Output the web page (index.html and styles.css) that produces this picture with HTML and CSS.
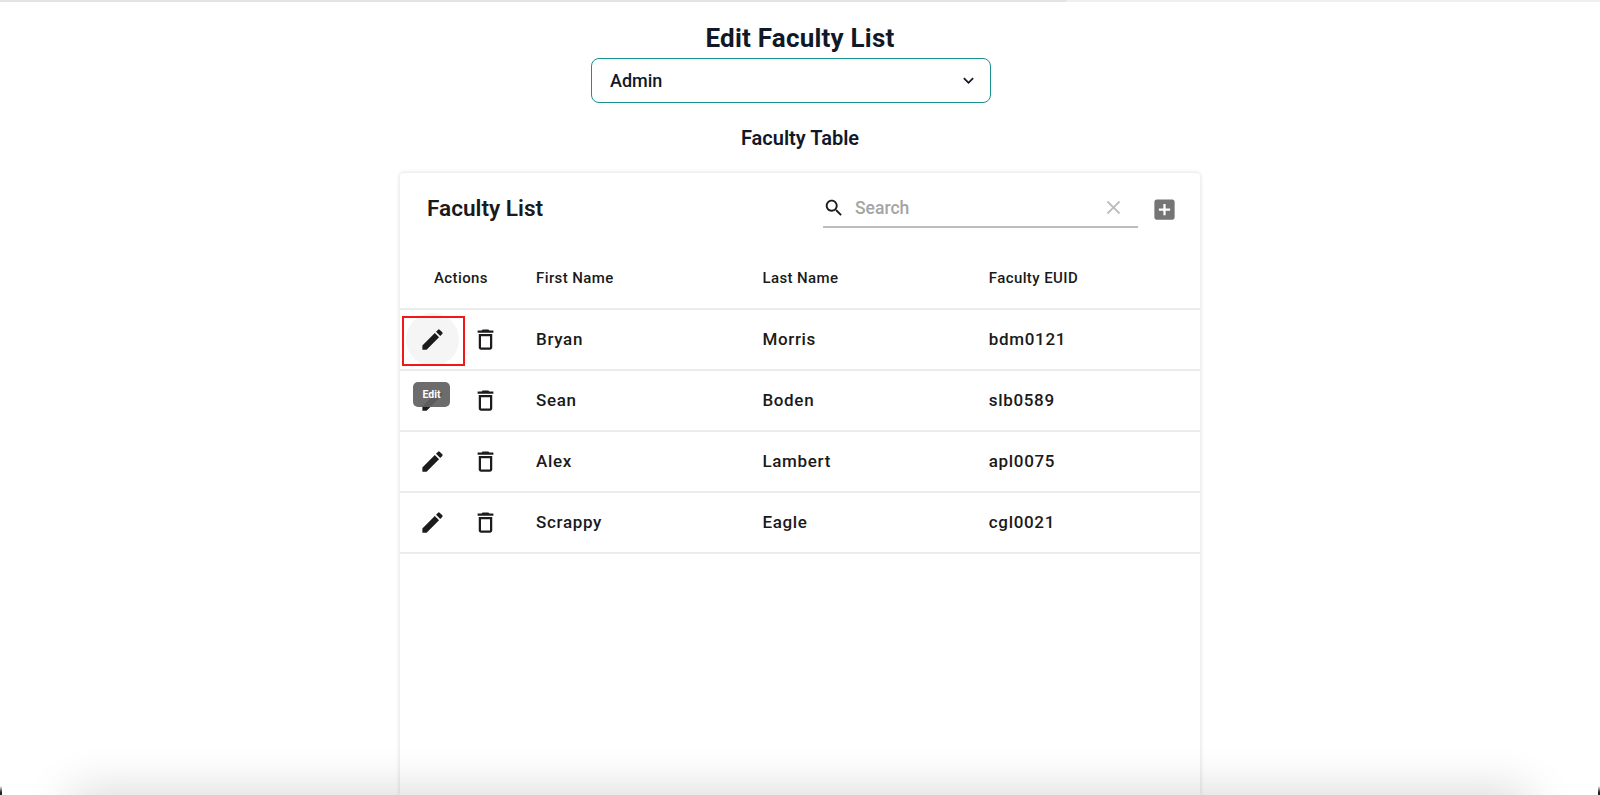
FILE: index.html
```html
<!DOCTYPE html>
<html lang="en">
<head>
<meta charset="utf-8">
<title>Edit Faculty List</title>
<link rel="stylesheet" href="styles.css">
</head>
<body>
<div class="topbar"><div class="topbar-fill"></div></div>
<main class="page">
  <h1 class="title">Edit Faculty List</h1>
  <div class="select">
    <span>Admin</span>
    <svg class="chevron" viewBox="0 0 24 24"><path d="M7.41 8.59 12 13.17l4.59-4.58L18 10l-6 6-6-6 1.41-1.41z"/></svg>
  </div>
  <h2 class="subtitle">Faculty Table</h2>
  <section class="card">
    <div class="toolbar">
      <h3 class="card-title">Faculty List</h3>
      <div class="search">
        <svg class="search-icon" viewBox="0 0 24 24"><path d="M15.5 14h-.79l-.28-.27C15.41 12.59 16 11.11 16 9.5 16 5.91 13.09 3 9.5 3S3 5.91 3 9.5 5.91 16 9.5 16c1.61 0 3.09-.59 4.23-1.57l.27.28v.79l5 4.99L20.49 19l-4.99-5zm-6 0C7.01 14 5 11.99 5 9.5S7.01 5 9.5 5 14 7.01 14 9.5 11.99 14 9.5 14z"/></svg>
        <span class="search-text">Search</span>
        <svg class="clear-icon" viewBox="0 0 24 24"><path d="M19 6.41 17.59 5 12 10.59 6.41 5 5 6.41 10.59 12 5 17.59 6.41 19 12 13.41 17.59 19 19 17.59 13.41 12z"/></svg>
      </div>
      <svg class="add-icon" viewBox="0 0 24 24"><path d="M19 3H5c-1.11 0-2 .9-2 2v14c0 1.1.89 2 2 2h14c1.1 0 2-.9 2-2V5c0-1.1-.9-2-2-2zm-2 10h-4v4h-2v-4H7v-2h4V7h2v4h4v2z"/></svg>
    </div>
    <div class="row head">
      <div class="actions-head">Actions</div>
      <div>First Name</div>
      <div>Last Name</div>
      <div>Faculty EUID</div>
    </div>
    <div class="row">
      <div class="actions">
        <span class="btn hovered"><svg class="icon" viewBox="0 0 24 24"><path d="M3 17.25V21h3.75L17.81 9.94l-3.75-3.75L3 17.25zM20.71 7.04c.39-.39.39-1.02 0-1.41l-2.34-2.34a.9959.9959 0 0 0-1.41 0l-1.83 1.83 3.75 3.75 1.83-1.83z"/></svg><span class="highlight"></span></span>
        <span class="btn"><svg class="icon" viewBox="0 0 24 24"><path d="M6 19c0 1.1.9 2 2 2h8c1.1 0 2-.9 2-2V7H6v12zM8 9h8v10H8V9zm7.5-5-1-1h-5l-1 1H5v2h14V4h-3.5z"/></svg></span>
      </div>
      <div class="cell">Bryan</div><div class="cell">Morris</div><div class="cell">bdm0121</div>
    </div>
    <div class="row">
      <div class="actions">
        <span class="btn"><svg class="icon" viewBox="0 0 24 24"><path d="M3 17.25V21h3.75L17.81 9.94l-3.75-3.75L3 17.25zM20.71 7.04c.39-.39.39-1.02 0-1.41l-2.34-2.34a.9959.9959 0 0 0-1.41 0l-1.83 1.83 3.75 3.75 1.83-1.83z"/></svg><span class="tooltip">Edit</span></span>
        <span class="btn"><svg class="icon" viewBox="0 0 24 24"><path d="M6 19c0 1.1.9 2 2 2h8c1.1 0 2-.9 2-2V7H6v12zM8 9h8v10H8V9zm7.5-5-1-1h-5l-1 1H5v2h14V4h-3.5z"/></svg></span>
      </div>
      <div class="cell">Sean</div><div class="cell">Boden</div><div class="cell">slb0589</div>
    </div>
    <div class="row">
      <div class="actions">
        <span class="btn"><svg class="icon" viewBox="0 0 24 24"><path d="M3 17.25V21h3.75L17.81 9.94l-3.75-3.75L3 17.25zM20.71 7.04c.39-.39.39-1.02 0-1.41l-2.34-2.34a.9959.9959 0 0 0-1.41 0l-1.83 1.83 3.75 3.75 1.83-1.83z"/></svg></span>
        <span class="btn"><svg class="icon" viewBox="0 0 24 24"><path d="M6 19c0 1.1.9 2 2 2h8c1.1 0 2-.9 2-2V7H6v12zM8 9h8v10H8V9zm7.5-5-1-1h-5l-1 1H5v2h14V4h-3.5z"/></svg></span>
      </div>
      <div class="cell">Alex</div><div class="cell">Lambert</div><div class="cell">apl0075</div>
    </div>
    <div class="row">
      <div class="actions">
        <span class="btn"><svg class="icon" viewBox="0 0 24 24"><path d="M3 17.25V21h3.75L17.81 9.94l-3.75-3.75L3 17.25zM20.71 7.04c.39-.39.39-1.02 0-1.41l-2.34-2.34a.9959.9959 0 0 0-1.41 0l-1.83 1.83 3.75 3.75 1.83-1.83z"/></svg></span>
        <span class="btn"><svg class="icon" viewBox="0 0 24 24"><path d="M6 19c0 1.1.9 2 2 2h8c1.1 0 2-.9 2-2V7H6v12zM8 9h8v10H8V9zm7.5-5-1-1h-5l-1 1H5v2h14V4h-3.5z"/></svg></span>
      </div>
      <div class="cell">Scrappy</div><div class="cell">Eagle</div><div class="cell">cgl0021</div>
    </div>
  </section>
</main>
<div class="shade-clip">
  <div class="bottom-shade"></div>
  <div class="corner corner-left"></div>
  <div class="corner corner-right"></div>
</div>
</body>
</html>
```
FILE: styles.css
```css
* { box-sizing: border-box; }
html, body { margin: 0; height: 795px; overflow: hidden; background: #fff; }
body { font-family: Roboto, "Liberation Sans", sans-serif; color: #111827; position: relative; }

.topbar { height: 2px; background: #efefef; }
.topbar-fill { width: 1067px; height: 2px; background: #e4e4e4; }

.page { height: 793px; display: flex; flex-direction: column; align-items: center; }
.title { margin: 20px 0 0; font-size: 26px; line-height: 32px; font-weight: 700; letter-spacing: .22px; }
.select {
  width: 400px; height: 45px; margin: 4px 18px 0 0; padding: 0 11px 0 18px; flex: none;
  display: flex; align-items: center; justify-content: space-between;
  border: 1px solid #1a8f8f; border-radius: 8px;
  font-size: 18px; font-weight: 500;
}
.chevron { width: 21px; height: 21px; fill: #111827; }
.subtitle { margin: 23px 0 0; font-size: 20px; line-height: 24px; font-weight: 600; }

.card {
  width: 800px; flex: 1; margin-top: 23px; background: #fff; border-radius: 4px 4px 0 0;
  box-shadow: 0 0 4px rgba(0,0,0,.16);
  color: #1a1a1a;
}
.toolbar { height: 73px; padding: 0 22.5px 0 27px; display: flex; align-items: center; }
.card-title { margin: 0 0 2px; font-size: 22.6px; line-height: 28px; font-weight: 600; flex: 1; }
.search {
  width: 315px; height: 36px; margin: 1px 12.5px 0 0; display: flex; align-items: center;
  border-bottom: 2px solid #bdbdbd; padding: 0 13px 3px 0;
}
.search-icon { width: 22px; height: 22px; fill: #1a1a1a; }
.search-text { flex: 1; margin-left: 10px; font-size: 17.5px; font-weight: 500; color: #a5a5a5; }
.clear-icon { width: 23px; height: 23px; fill: #bdbdbd; }
.add-icon { width: 27px; height: 27px; fill: #757575; }

.row {
  display: grid; grid-template-columns: 136px 226.4px 226.4px 1fr;
  align-items: center; height: 61px; border-bottom: 2px solid #ebebeb;
  font-size: 17px; font-weight: 500; letter-spacing: .67px;
}
.row.head { height: 64px; padding-top: 1px; font-size: 15px; letter-spacing: .4px; }
.cell { padding-bottom: 2px; }
.actions-head { padding-left: 34px; }
.actions { display: flex; padding-left: 6px; }
.btn { position: relative; width: 53px; height: 53px; display: flex; align-items: center; justify-content: center; border-radius: 50%; }
.btn.hovered { background: #f5f5f5; }
.icon { width: 27px; height: 27px; fill: #1c1c1c; }
.highlight { position: absolute; left: -4px; top: 3px; width: 63px; height: 50px; border: 2px solid #f01818; }
.tooltip {
  position: absolute; left: 7px; top: 8px; width: 37px; height: 25px;
  display: flex; align-items: center; justify-content: center;
  background: rgba(97,97,97,.93); border-radius: 5px; color: #fff;
  font-size: 10.5px; font-weight: 700; letter-spacing: 0;
}
.shade-clip { position: absolute; inset: 0; overflow: hidden; pointer-events: none; }
.bottom-shade {
  position: absolute; left: 72px; right: 72px; top: 796px; height: 40px;
  box-shadow: 0 0 50px 0 rgba(0,0,0,.2);
}
.corner { position: absolute; bottom: 0; width: 2px; height: 9px; background: linear-gradient(to bottom, rgba(0,0,0,0), #222 70%); }
.corner-left { left: 0; }
.corner-right { right: 0; }
```
